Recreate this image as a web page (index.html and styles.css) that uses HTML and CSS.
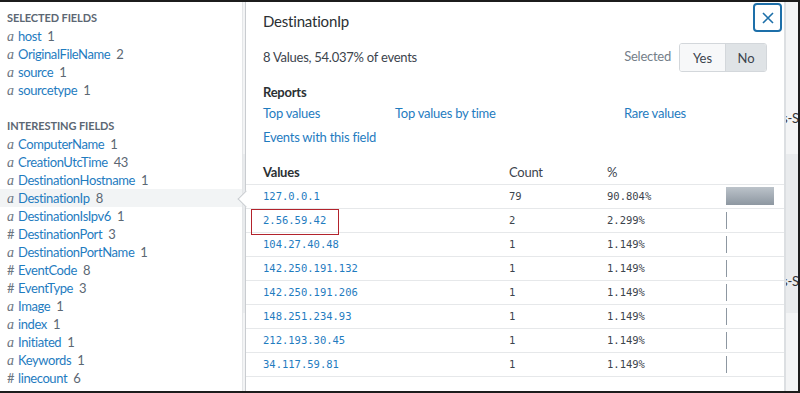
FILE: index.html
```html
<!DOCTYPE html>
<html lang="en">
<head>
    <meta charset="UTF-8">
    <title>Fields - DestinationIp</title>
    <link rel="stylesheet" href="styles.css">
</head>
<body>
    <div class="frame">
        <aside class="fields">
            <h3>Selected Fields</h3>
            <ul>
                <li><span class="type">a</span><a>host</a><span class="count">1</span></li>
                <li><span class="type">a</span><a>OriginalFileName</a><span class="count">2</span></li>
                <li><span class="type">a</span><a>source</a><span class="count">1</span></li>
                <li><span class="type">a</span><a>sourcetype</a><span class="count">1</span></li>
            </ul>

            <h3 class="gap">Interesting Fields</h3>
            <ul>
                <li><span class="type">a</span><a>ComputerName</a><span class="count">1</span></li>
                <li><span class="type">a</span><a>CreationUtcTime</a><span class="count">43</span></li>
                <li><span class="type">a</span><a>DestinationHostname</a><span class="count">1</span></li>
                <li class="active"><span class="type">a</span><a>DestinationIp</a><span class="count">8</span></li>
                <li><span class="type">a</span><a>DestinationIsIpv6</a><span class="count">1</span></li>
                <li><span class="type num">#</span><a>DestinationPort</a><span class="count">3</span></li>
                <li><span class="type">a</span><a>DestinationPortName</a><span class="count">1</span></li>
                <li><span class="type num">#</span><a>EventCode</a><span class="count">8</span></li>
                <li><span class="type num">#</span><a>EventType</a><span class="count">3</span></li>
                <li><span class="type">a</span><a>Image</a><span class="count">1</span></li>
                <li><span class="type">a</span><a>index</a><span class="count">1</span></li>
                <li><span class="type">a</span><a>Initiated</a><span class="count">1</span></li>
                <li><span class="type">a</span><a>Keywords</a><span class="count">1</span></li>
                <li><span class="type num">#</span><a>linecount</a><span class="count">6</span></li>
            </ul>
        </aside>

        <main class="events">
            <div class="event">
                <p>s-Sysmon/Operational</p>
            </div>
            <div class="event shaded">
                <p>s-Sysmon/Operational</p>
            </div>
            <div class="event rest"></div>
        </main>

        <section class="popover">
            <span class="arrow"></span>

            <div class="pop_head">
                <h2>DestinationIp</h2>
                <button class="close" aria-label="Close">
                    <svg width="12" height="12" viewBox="0 0 12 12">
                        <path d="M1 1 L11 11 M11 1 L1 11" stroke="#1d6fa9" stroke-width="1.6" fill="none"/>
                    </svg>
                </button>
            </div>

            <div class="summary">
                <span>8 Values, 54.037% of events</span>
                <div class="selected">
                    <span class="label">Selected</span>
                    <div class="toggle">
                        <button>Yes</button>
                        <button class="on">No</button>
                    </div>
                </div>
            </div>

            <h4>Reports</h4>
            <div class="reports">
                <a>Top values</a>
                <a>Top values by time</a>
                <a>Rare values</a>
                <a>Events with this field</a>
            </div>

            <table class="values">
                <thead>
                    <tr><th>Values</th><th>Count</th><th>%</th><th></th></tr>
                </thead>
                <tbody>
                    <tr><td><a>127.0.0.1</a></td><td>79</td><td>90.804%</td><td><span class="bar" style="width: 48px"></span></td></tr>
                    <tr><td><a>2.56.59.42</a><span class="mark"></span></td><td>2</td><td>2.299%</td><td><span class="bar thin"></span></td></tr>
                    <tr><td><a>104.27.40.48</a></td><td>1</td><td>1.149%</td><td><span class="bar thin"></span></td></tr>
                    <tr><td><a>142.250.191.132</a></td><td>1</td><td>1.149%</td><td><span class="bar thin"></span></td></tr>
                    <tr><td><a>142.250.191.206</a></td><td>1</td><td>1.149%</td><td><span class="bar thin"></span></td></tr>
                    <tr><td><a>148.251.234.93</a></td><td>1</td><td>1.149%</td><td><span class="bar thin"></span></td></tr>
                    <tr><td><a>212.193.30.45</a></td><td>1</td><td>1.149%</td><td><span class="bar thin"></span></td></tr>
                    <tr><td><a>34.117.59.81</a></td><td>1</td><td>1.149%</td><td><span class="bar thin"></span></td></tr>
                </tbody>
            </table>
        </section>
    </div>
</body>
</html>
```

FILE: styles.css
```css
*{
    margin: 0;
    padding: 0;
    box-sizing: border-box;
}

body{
    margin: 0;
    font-family: Lato, "Open Sans", sans-serif;
    font-size: 13px;
    letter-spacing: -0.25px;
    color: #3c444d;
    background: #fff;
}

a{
    color: #1f7cbf;
    cursor: pointer;
}

.frame{
    position: relative;
    display: flex;
    width: 800px;
    height: 393px;
    border: 2px solid #1c1c1c;
    border-left: none;
    overflow: hidden;
}

/* field list on the left */
.fields{
    width: 243px;
    flex: none;
    padding: 7px 0 0 7px;
    border-right: 1px solid #e4e6e8;
    letter-spacing: -0.4px;
}

.fields h3{
    font-size: 11px;
    font-weight: 700;
    line-height: 18px;
    text-transform: uppercase;
    color: #5c6773;
    letter-spacing: -0.1px;
}

.fields h3.gap{
    margin-top: 18px;
}

.fields ul{
    list-style: none;
}

.fields li{
    display: flex;
    align-items: baseline;
    height: 18px;
    line-height: 18px;
    white-space: nowrap;
}

.fields li.active{
    margin-left: -7px;
    padding-left: 7px;
    background: #f2f4f5;
}

.type{
    width: 11px;
    font-family: "Liberation Serif", serif;
    font-style: italic;
    font-size: 14px;
    color: #6b7580;
}

.type.num{
    font-family: Lato, sans-serif;
    font-style: normal;
    font-size: 13px;
}

.count{
    margin-left: 6px;
    color: #5c6773;
}

/* events behind the popover */
.events{
    flex: 1;
    display: flex;
    flex-direction: column;
    background: #f3f4f5;
}

.event{
    height: 152px;
    padding-left: 539px;
    white-space: nowrap;
    overflow: hidden;
    color: #333;
}

.event p{
    line-height: 18px;
    margin-top: 107px;
}

.event.shaded{
    height: 159px;
    background: #e9ebed;
}

.event.shaded p{
    margin-top: 118px;
}

.event.rest{
    flex: 1;
}

/* the field popover */
.popover{
    position: absolute;
    left: 245px;
    top: 0;
    bottom: 0;
    width: 541px;
    background: #fff;
    border-left: 1px solid #c9ccd0;
    border-right: 2px solid #dcdfe2;
}

.arrow{
    position: absolute;
    left: -6px;
    top: 191px;
    width: 12px;
    height: 12px;
    background: #fff;
    border-left: 1px solid #c9ccd0;
    border-bottom: 1px solid #c9ccd0;
    transform: rotate(45deg);
}

.pop_head{
    display: flex;
    justify-content: space-between;
    align-items: flex-start;
    height: 31px;
    padding-left: 17px;
}

.pop_head h2{
    margin-top: 9px;
    font-size: 15px;
    font-weight: 400;
    line-height: 20px;
    letter-spacing: -0.2px;
    color: #2b3033;
}

.close{
    margin-top: 1px;
    margin-right: 2px;
    width: 29px;
    height: 29px;
    display: flex;
    align-items: center;
    justify-content: center;
    background: #fff;
    border: 2px solid #1d6fa9;
    border-radius: 4px;
}

.summary{
    display: flex;
    justify-content: space-between;
    align-items: center;
    margin-top: 10px;
    padding: 0 17px;
    height: 29px;
}

.summary > span{
    padding-bottom: 2px;
}

.selected{
    display: flex;
    align-items: center;
}

.selected .label{
    color: #75808a;
    margin-right: 8px;
    padding-bottom: 4px;
}

.toggle{
    display: flex;
    height: 29px;
    border: 1px solid #d3d7db;
    border-radius: 3px;
    overflow: hidden;
}

.toggle button{
    font-family: Lato, sans-serif;
    font-size: 13px;
    color: #3c444d;
    border: none;
    width: 45px;
    background: #f7f8f9;
}

.toggle button.on{
    width: 41px;
    background: #dfe3e6;
    border-left: 1px solid #d3d7db;
}

.popover h4{
    margin-top: 11px;
    padding-left: 17px;
    font-size: 13px;
    font-weight: 700;
    line-height: 18px;
    color: #2b3033;
}

.reports{
    display: grid;
    grid-template-columns: 132px 229px auto;
    row-gap: 6px;
    margin-top: 3px;
    padding-left: 17px;
    line-height: 18px;
}

.values{
    width: 100%;
    margin-top: 14px;
    border-collapse: collapse;
}

.values th{
    height: 24px;
    text-align: left;
    font-weight: 400;
    color: #3c444d;
    border-bottom: 1px solid #e6e8ea;
}

.values th:first-child{
    font-weight: 700;
    color: #2b3033;
}

.values td{
    height: 24px;
    padding: 0;
    font-family: "DejaVu Sans Mono", monospace;
    font-size: 10.5px;
    letter-spacing: 0;
    color: #3c444d;
    border-bottom: 1px solid #e6e8ea;
    vertical-align: middle;
}

.values th:first-child, .values td:first-child{
    width: 263px;
    padding-left: 17px;
    position: relative;
}

.values th:nth-child(2), .values td:nth-child(2){
    width: 98px;
}

.values th:nth-child(3), .values td:nth-child(3){
    width: 119px;
}

.mark{
    position: absolute;
    left: 5px;
    top: 0;
    width: 88px;
    height: 26px;
    border: 1px solid #b3232c;
}

.bar{
    display: block;
    height: 18px;
    background: linear-gradient(#bcc3ca, #8d97a1);
}

.bar.thin{
    width: 1px;
    height: 17px;
    background: #8d97a1;
}
```
